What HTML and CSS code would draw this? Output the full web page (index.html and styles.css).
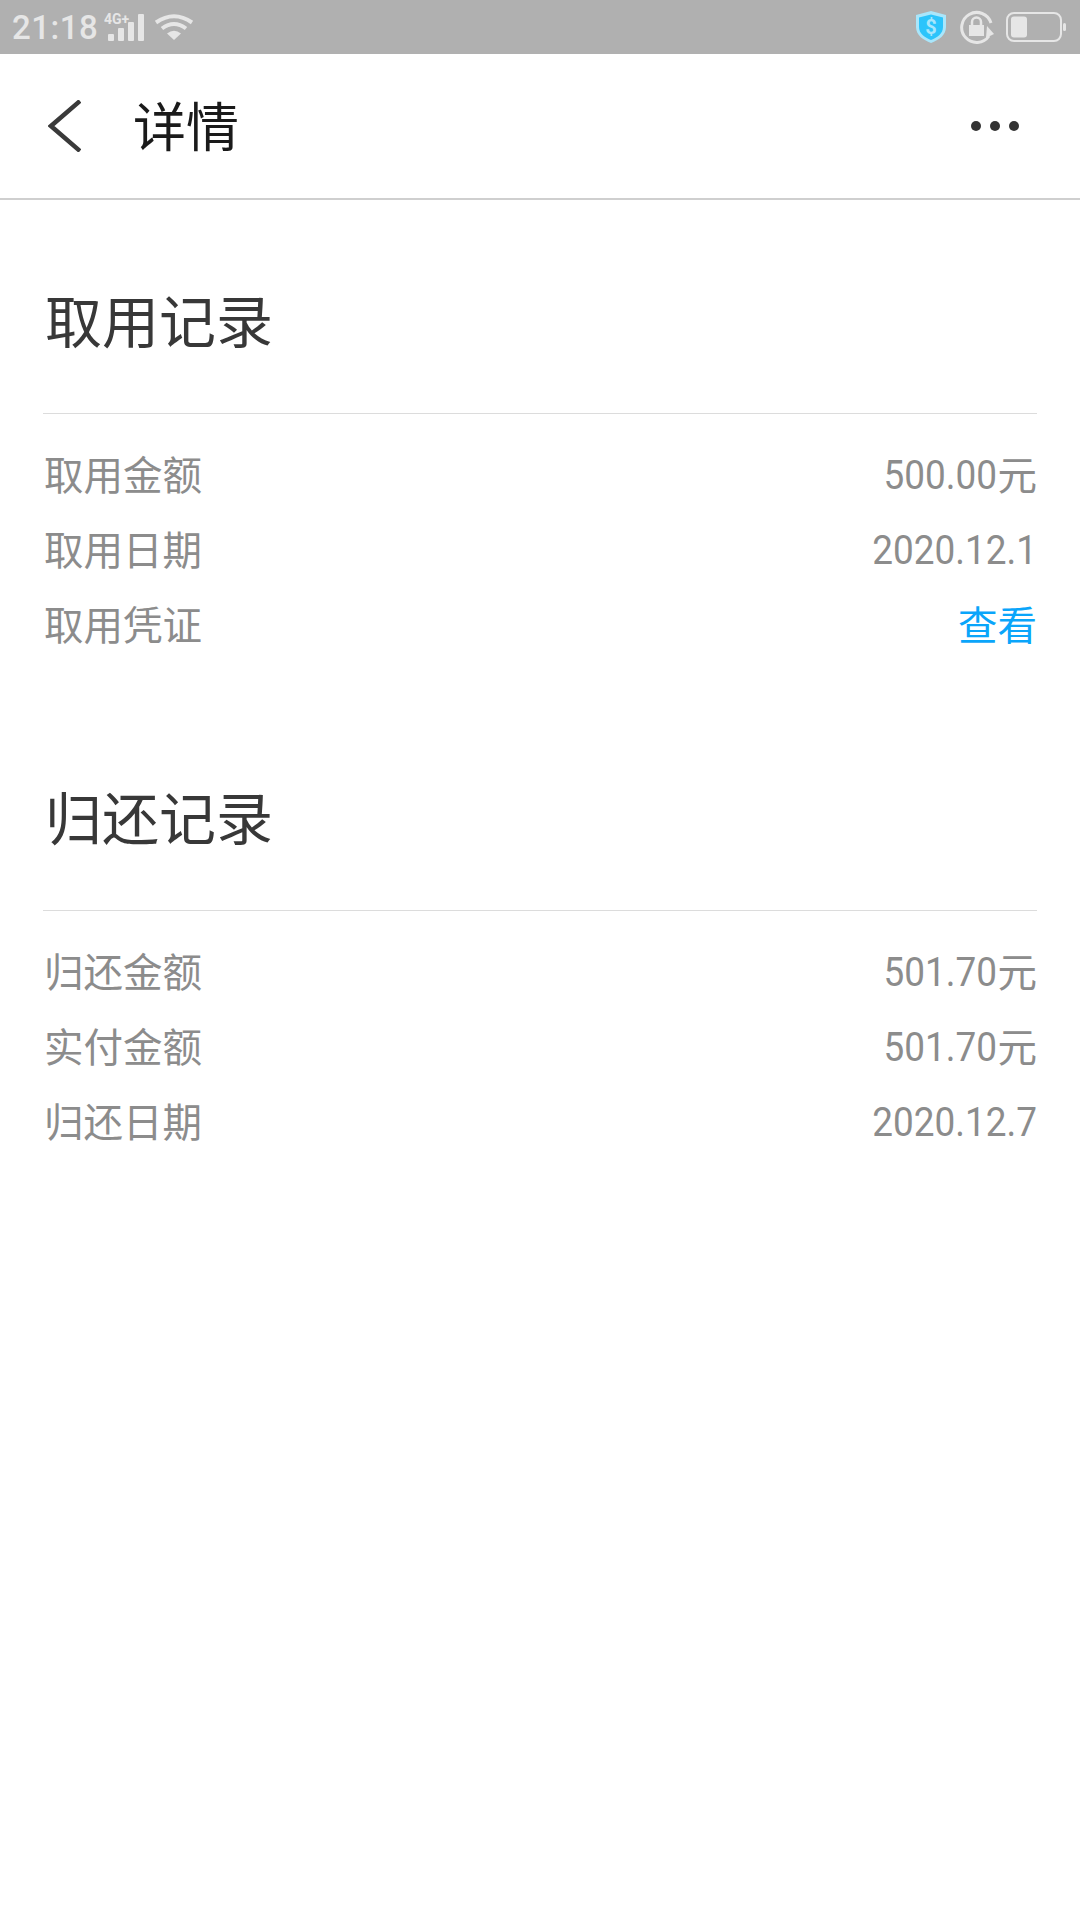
FILE: index.html
```html
<!DOCTYPE html>
<html lang="zh-CN">
<head>
<meta charset="utf-8">
<title>详情</title>
<link rel="stylesheet" href="styles.css">
</head>
<body>
<div class="status">
  <div class="status-left">
    <span class="time">21:18</span>
    <svg class="sig" width="42" height="32" viewBox="0 0 42 32"><text x="0" y="13" class="sig-text">4G+</text><g fill="#e6e6e6"><rect x="4" y="23" width="6" height="7" rx="1"/><rect x="14" y="17" width="6" height="13" rx="1"/><rect x="24" y="11" width="6" height="19" rx="1"/><rect x="34" y="3" width="6" height="27" rx="1"/></g></svg>
    <svg class="wifi" width="40" height="30" viewBox="0 0 40 30"><g fill="none" stroke="#e6e6e6" stroke-width="4"><path d="M2 10.500Q20 -2 38 10.500"/><path d="M8 16.500Q20 7.500 32 16.500"/></g><path d="M13 21.500Q20 16 27 21.500L20 28Z" fill="#e6e6e6"/></svg>
  </div>
  <div class="status-right">
    <svg class="shield" width="32" height="34" viewBox="0 0 32 34"><path d="M16 1L31 5V17C31 25 24 30 16 33C8 30 1 25 1 17V5Z" fill="#a9e6fb"/><path d="M16 4.500L28 7.500V17C28 23.500 22.500 27.500 16 30C9.500 27.500 4 23.500 4 17V7.500Z" fill="#2cc4fb"/><text x="16" y="24" class="dollar">$</text></svg>
    <svg class="lock" width="34" height="34" viewBox="0 0 34 34"><path d="M29 26A15 15 0 1 1 31 13" fill="none" stroke="#e6e6e6" stroke-width="3"/><path d="M27 16L34 24L26 28Z" fill="#e6e6e6"/><rect x="9" y="15" width="15" height="11" fill="#e6e6e6"/><path d="M12 15V12A4.500 4.500 0 0 1 21 12V15" fill="none" stroke="#e6e6e6" stroke-width="2.500"/></svg>
    <svg class="battery" width="60" height="30" viewBox="0 0 60 30"><rect x="1" y="1" width="54" height="28" rx="7" fill="none" stroke="#e6e6e6" stroke-width="2"/><rect x="5" y="4.500" width="16" height="21" rx="3" fill="#e6e6e6"/><rect x="57" y="11" width="3" height="8" rx="1.500" fill="#e6e6e6"/></svg>
  </div>
</div>
<header class="nav">
  <svg class="back" width="33" height="52" viewBox="0 0 33 52"><path d="M32 1L3 26L32 51" fill="none" stroke="#3a3a3a" stroke-width="4.500"/></svg>
  <h1 class="nav-title">详情</h1>
  <div class="more"><i></i><i></i><i></i></div>
</header>
<main>
  <section class="block">
    <h2 class="block-title">取用记录</h2>
    <div class="rows">
      <div class="row"><span>取用金额</span><span class="val"><span class="num">500.00</span>元</span></div>
      <div class="row"><span>取用日期</span><span class="val"><span class="num">2020.12.1</span></span></div>
      <div class="row"><span>取用凭证</span><span class="link">查看</span></div>
    </div>
  </section>
  <section class="block">
    <h2 class="block-title">归还记录</h2>
    <div class="rows">
      <div class="row"><span>归还金额</span><span class="val"><span class="num">501.70</span>元</span></div>
      <div class="row"><span>实付金额</span><span class="val"><span class="num">501.70</span>元</span></div>
      <div class="row"><span>归还日期</span><span class="val"><span class="num">2020.12.7</span></span></div>
    </div>
  </section>
</main>
</body>
</html>
```
FILE: styles.css
```css
* { box-sizing: border-box; }
html, body { margin: 0; padding: 0; }
body {
  width: 1080px;
  height: 1920px;
  background: #fff;
  font-family: "Noto Sans CJK SC", Roboto, sans-serif;
  overflow: hidden;
}
.status {
  height: 54px;
  background: #b0b0b0;
  display: flex;
  justify-content: space-between;
  align-items: center;
  padding: 0 14px 0 12px;
}
.status-left, .status-right { display: flex; align-items: center; }
.time {
  font-family: Roboto, sans-serif;
  font-size: 33px;
  font-weight: 500;
  color: #e6e6e6;
  letter-spacing: 0.5px;
}
.sig { margin-left: 6px; }
.sig-text { font: 700 14px Roboto, sans-serif; fill: #e6e6e6; }
.wifi { margin-left: 8px; }
.shield { margin-right: 13px; }
.dollar { font: 700 20px Roboto, sans-serif; fill: #a9e6fb; text-anchor: middle; }
.lock { margin-right: 12px; }
.nav {
  height: 146px;
  border-bottom: 2px solid #cfcfcf;
  display: flex;
  align-items: center;
  padding: 0 61px 0 48px;
}
.back { flex: none; }
.nav-title {
  margin: 0 0 4px 52px;
  font-size: 53px;
  font-weight: 400;
  color: #1a1a1a;
  line-height: 1;
  flex: 1;
}
.more { display: flex; gap: 9px; }
.more i { width: 10px; height: 10px; border-radius: 50%; background: #333; }
main { padding: 0 33px 0 43px; }
.block { padding-top: 89px; }
.block + .block { padding-top: 126px; }
.block-title {
  margin: 0;
  height: 125px;
  padding: 0 0 0 2px;
  font-size: 57px;
  font-weight: 400;
  line-height: 59px;
  color: #383838;
  border-bottom: 1px solid #dcdcdc;
  margin-right: 10px;
}
.block + .block .block-title { height: 125px; }
.rows { padding-top: 21px; margin-right: 10px; }
.row {
  height: 75px;
  display: flex;
  justify-content: space-between;
  align-items: center;
  padding: 0 0 0 1px;
  font-size: 39.500px;
  color: #8c8c8c;
}
.val { display: inline-flex; align-items: center; }
.num {
  display: inline-block;
  padding-top: 5px;
  font-family: Roboto, sans-serif;
  font-weight: 400;
  font-size: 41px;
  transform: scaleX(0.9);
  transform-origin: right center;
}
.link { color: #0aa5fa; }
```
